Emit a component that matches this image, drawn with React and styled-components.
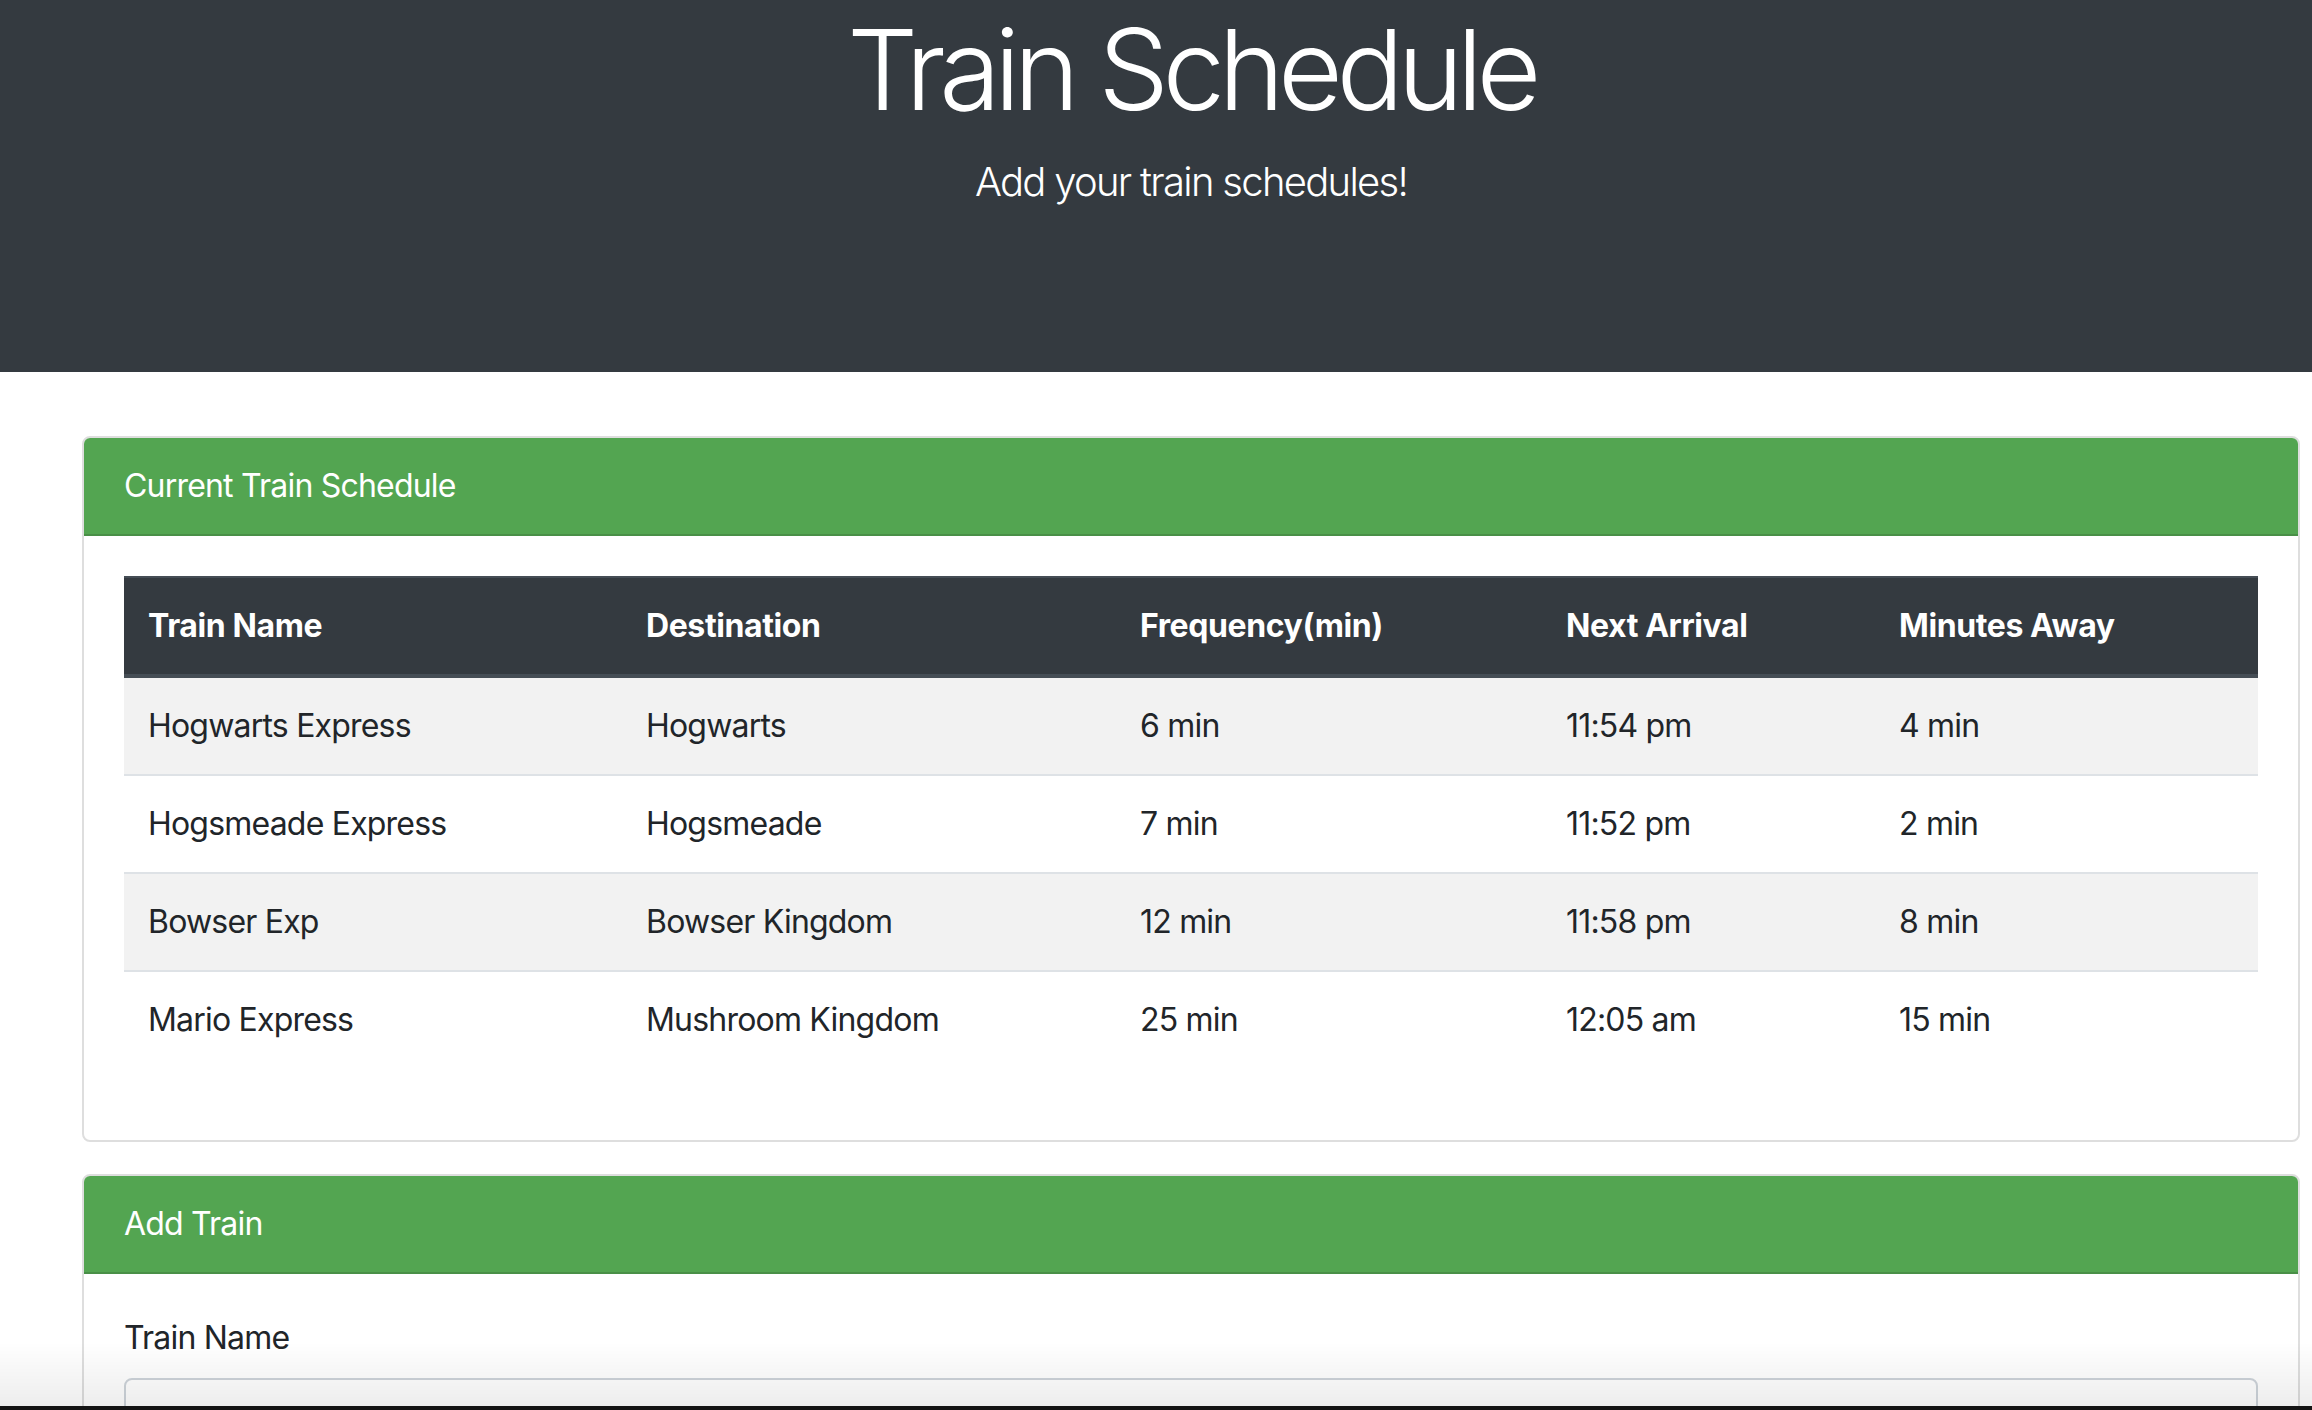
import React from "react";
import styled, { createGlobalStyle } from "styled-components";

const GlobalStyle = createGlobalStyle`
  * {
    box-sizing: border-box;
  }
  body {
    margin: 0;
    background: #fff;
    color: #212529;
    font-family: Inter, "Noto Sans", "Liberation Sans", sans-serif;
    font-size: 32px;
    line-height: 1.5;
    letter-spacing: -0.8px;
  }
`;

const Jumbotron = styled.header`
  background-color: #343a40;
  color: #fff;
  text-align: center;
  padding: 2px 0 160px 70px;
  h1 {
    margin: 0 0 16px;
    font-size: 112px;
    font-weight: 300;
    line-height: 134px;
    letter-spacing: -6.5px;
  }
  p {
    margin: 0;
    font-size: 40px;
    font-weight: 300;
    line-height: 60px;
    letter-spacing: -1.7px;
  }
`;

const Main = styled.main`
  padding: 64px 12px 0 82px;
`;

const Card = styled.section`
  border: 2px solid #dedede;
  border-radius: 8px;
  background: #fff;
  overflow: hidden;
  & + & {
    margin-top: 32px;
  }
`;

const CardHeader = styled.div`
  background-color: #53a551;
  color: #fff;
  padding: 24px 40px;
  font-size: 32px;
  line-height: 48px;
  border-bottom: 2px solid #498f47;
`;

const CardBody = styled.div`
  padding: 40px;
`;

const Table = styled.table`
  width: 100%;
  border-collapse: collapse;
  table-layout: fixed;
  margin-bottom: 32px;
  tbody tr:nth-of-type(odd) {
    background-color: #f2f2f2;
  }
`;

const Th = styled.th`
  width: ${(p) => (p.$w ? `${p.$w}px` : "auto")};
  background-color: #343a40;
  color: #fff;
  text-align: left;
  font-weight: 700;
  letter-spacing: -0.4px;
  padding: 24px;
  line-height: 48px;
  border-top: 2px solid #454d55;
  border-bottom: 4px solid #454d55;
`;

const Td = styled.td`
  padding: 24px;
  line-height: 48px;
  border-top: 2px solid #dee2e6;
`;

const FormGroup = styled.div`
  margin-bottom: 32px;
`;

const Label = styled.label`
  display: block;
  margin-bottom: 16px;
  line-height: 48px;
`;

const Input = styled.input`
  display: block;
  width: 100%;
  height: 76px;
  padding: 12px 24px;
  font: inherit;
  color: #495057;
  border: 2px solid #ced4da;
  border-radius: 8px;
  background: #fff;
`;

const SubmitButton = styled.button`
  font: inherit;
  color: #fff;
  background: #007bff;
  border: 2px solid #007bff;
  border-radius: 8px;
  padding: 12px 24px;
`;

const BottomShade = styled.div`
  position: fixed;
  left: 0;
  right: 0;
  bottom: 4px;
  height: 64px;
  pointer-events: none;
  background: linear-gradient(rgba(0, 0, 0, 0), rgba(0, 0, 0, 0.07));
  &::after {
    content: "";
    position: absolute;
    left: 0;
    right: 0;
    top: 100%;
    height: 4px;
    background: #141414;
  }
`;

const columns = [
  { title: "Train Name", w: 498 },
  { title: "Destination", w: 494 },
  { title: "Frequency(min)", w: 426 },
  { title: "Next Arrival", w: 333 },
  { title: "Minutes Away" },
];

const trains = [
  ["Hogwarts Express", "Hogwarts", "6 min", "11:54 pm", "4 min"],
  ["Hogsmeade Express", "Hogsmeade", "7 min", "11:52 pm", "2 min"],
  ["Bowser Exp", "Bowser Kingdom", "12 min", "11:58 pm", "8 min"],
  ["Mario Express", "Mushroom Kingdom", "25 min", "12:05 am", "15 min"],
];

const fields = [
  { id: "train-name", label: "Train Name" },
  { id: "destination", label: "Destination" },
  { id: "first-train", label: "First Train Time (HH:mm - military time)" },
  { id: "frequency", label: "Frequency (min)" },
];

export default function App() {
  return (
    <>
      <GlobalStyle />
      <Jumbotron>
        <h1>Train Schedule</h1>
        <p>Add your train schedules!</p>
      </Jumbotron>
      <Main>
        <Card>
          <CardHeader>Current Train Schedule</CardHeader>
          <CardBody>
            <Table>
              <thead>
                <tr>
                  {columns.map((c) => (
                    <Th key={c.title} $w={c.w}>
                      {c.title}
                    </Th>
                  ))}
                </tr>
              </thead>
              <tbody>
                {trains.map((row) => (
                  <tr key={row[0]}>
                    {row.map((cell, i) => (
                      <Td key={i}>{cell}</Td>
                    ))}
                  </tr>
                ))}
              </tbody>
            </Table>
          </CardBody>
        </Card>
        <Card>
          <CardHeader>Add Train</CardHeader>
          <CardBody>
            {fields.map((f) => (
              <FormGroup key={f.id}>
                <Label htmlFor={f.id}>{f.label}</Label>
                <Input id={f.id} type="text" />
              </FormGroup>
            ))}
            <SubmitButton type="submit">Submit</SubmitButton>
          </CardBody>
        </Card>
      </Main>
      <BottomShade />
    </>
  );
}
